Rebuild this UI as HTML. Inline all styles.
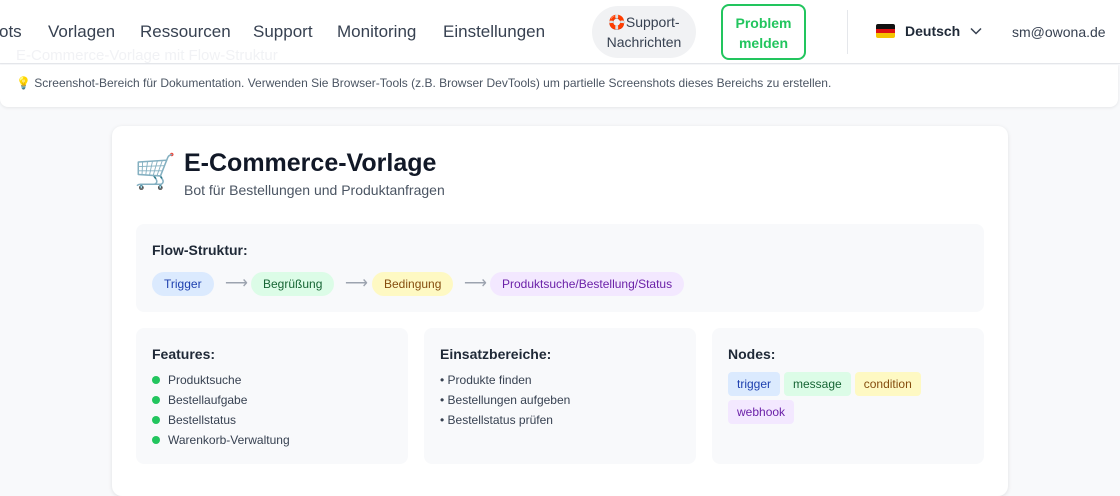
<!DOCTYPE html>
<html><head><meta charset="utf-8"><style>
*{box-sizing:border-box;margin:0;padding:0}
body{width:1120px;height:488px;overflow:hidden;background:#f8f9fb;font-family:"Liberation Sans",sans-serif;color:#111827;position:relative}
.nav{position:absolute;left:0;top:0;width:1120px;height:64px;background:#fff;border-bottom:1px solid #e5e7eb}
.nav .l{position:absolute;top:22px;font-size:17px;color:#374151}
.ghost{position:absolute;left:16px;top:47px;font-size:15px;color:#f1f2f5}
.sup{position:absolute;left:592px;top:6px;width:104px;height:52px;border-radius:26px;background:#f1f2f4;font-size:14px;color:#374151;text-align:center;line-height:20px;padding-top:6px}
.pm{position:absolute;left:721px;top:4px;width:85px;height:56px;border:2px solid #22c55e;border-radius:8px;color:#22c55e;font-weight:bold;font-size:14px;text-align:center;line-height:20px;padding-top:7px}
.sep{position:absolute;left:847px;top:10px;width:1px;height:44px;background:#e5e7eb}
.hint{position:absolute;left:0;top:65px;width:1118px;height:42px;background:#fff;border-radius:0 0 8px 8px;box-shadow:0 1px 3px rgba(0,0,0,.08);font-size:12px;color:#4b5563;padding:11px 16px}
.card{position:absolute;left:112px;top:126px;width:896px;height:370px;background:#fff;border-radius:10px;box-shadow:0 1px 4px rgba(0,0,0,.1)}
.t{position:absolute;left:72px;top:23px;font-size:25px;font-weight:bold}
.st{position:absolute;left:72px;top:56px;font-size:14px;color:#4b5563}
.box{position:absolute;background:#f8f9fb;border-radius:8px}
.h{font-size:14px;font-weight:bold;color:#1f2937}
.pill{position:absolute;top:146px;height:24px;border-radius:12px;font-size:12px;line-height:24px;padding:0 12px}
.arr{position:absolute;top:146px;color:#9ca3af;font-size:16px;line-height:24px}
.li{font-size:12px;color:#374151;height:20px;line-height:20px}
.dot{display:inline-block;width:8px;height:8px;border-radius:50%;background:#22c55e;margin-right:8px;vertical-align:0}
.tag{display:inline-block;font-size:12px;padding:0 9px;height:24px;line-height:24px;border-radius:4px;margin:0 4px 4px 0}
</style></head><body>
<div class="nav">
<div class="ghost">E-Commerce-Vorlage mit Flow-Struktur</div>
<span class="l" style="left:-1px">ots</span>
<span class="l" style="left:48px">Vorlagen</span>
<span class="l" style="left:140px">Ressourcen</span>
<span class="l" style="left:253px">Support</span>
<span class="l" style="left:337px">Monitoring</span>
<span class="l" style="left:443px">Einstellungen</span>
<div class="sup">🛟Support-<br>Nachrichten</div>
<div class="pm">Problem<br>melden</div>
<div class="sep"></div>
<div style="position:absolute;left:876px;top:24px;width:19px;height:14px;border-radius:2px;overflow:hidden"><div style="height:5px;background:#111"></div><div style="height:4px;background:#dd1111"></div><div style="height:5px;background:#f5c400"></div></div>
<span style="position:absolute;left:905px;top:23px;font-size:14px;font-weight:bold;color:#1f2937">Deutsch</span>
<svg style="position:absolute;left:970px;top:27px" width="12" height="8" viewBox="0 0 12 8"><path d="M1 1.5l5 5 5-5" fill="none" stroke="#374151" stroke-width="1.5"/></svg>
<span style="position:absolute;left:1012px;top:24px;font-size:14px;color:#374151">sm@owona.de</span>
</div>
<div class="hint">💡 Screenshot-Bereich für Dokumentation. Verwenden Sie Browser-Tools (z.B. Browser DevTools) um partielle Screenshots dieses Bereichs zu erstellen.</div>
<div class="card">
<div style="position:absolute;left:22px;top:26px;font-size:34px;line-height:40px">🛒</div>
<div class="t">E-Commerce-Vorlage</div>
<div class="st">Bot für Bestellungen und Produktanfragen</div>
<div class="box" style="left:24px;top:98px;width:848px;height:88px"></div>
<div class="h" style="position:absolute;left:40px;top:116px">Flow-Struktur:</div>
<div class="pill" style="left:40px;background:#dbeafe;color:#1e40af">Trigger</div>
<div class="arr" style="left:113px">⟶</div>
<div class="pill" style="left:139px;background:#dcfce7;color:#166534">Begrüßung</div>
<div class="arr" style="left:233px">⟶</div>
<div class="pill" style="left:260px;background:#fef9c3;color:#854d0e">Bedingung</div>
<div class="arr" style="left:352px">⟶</div>
<div class="pill" style="left:378px;background:#f3e8ff;color:#6b21a8">Produktsuche/Bestellung/Status</div>
<div class="box" style="left:24px;top:202px;width:272px;height:136px;padding:18px 16px">
<div class="h" style="margin-bottom:8px">Features:</div>
<div class="li"><span class="dot"></span>Produktsuche</div>
<div class="li"><span class="dot"></span>Bestellaufgabe</div>
<div class="li"><span class="dot"></span>Bestellstatus</div>
<div class="li"><span class="dot"></span>Warenkorb-Verwaltung</div>
</div>
<div class="box" style="left:312px;top:202px;width:272px;height:136px;padding:18px 16px">
<div class="h" style="margin-bottom:8px">Einsatzbereiche:</div>
<div class="li">• Produkte finden</div>
<div class="li">• Bestellungen aufgeben</div>
<div class="li">• Bestellstatus prüfen</div>
</div>
<div class="box" style="left:600px;top:202px;width:272px;height:136px;padding:18px 16px">
<div class="h" style="margin-bottom:10px">Nodes:</div>
<span class="tag" style="background:#dbeafe;color:#1e40af">trigger</span><span class="tag" style="background:#dcfce7;color:#166534">message</span><span class="tag" style="background:#fef9c3;color:#854d0e">condition</span><br><span class="tag" style="background:#f3e8ff;color:#6b21a8">webhook</span>
</div>
</div>
</body></html>
